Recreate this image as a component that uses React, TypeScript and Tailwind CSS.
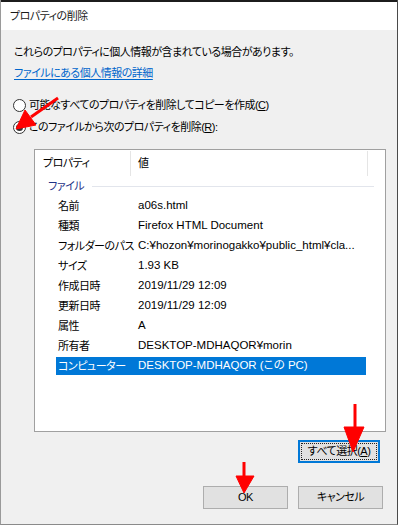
export default function App() {
  const rows: [string, string][] = [
    ["名前", "a06s.html"],
    ["種類", "Firefox HTML Document"],
    ["フォルダーのパス", "C:¥hozon¥morinogakko¥public_html¥cla..."],
    ["サイズ", "1.93 KB"],
    ["作成日時", "2019/11/29 12:09"],
    ["更新日時", "2019/11/29 12:09"],
    ["属性", "A"],
    ["所有者", "DESKTOP-MDHAQOR¥morin"],
  ];
  return (
    <div
      className="relative w-[398px] h-[525px] bg-[#f0f0f0] border-l border-r border-b border-l-[#9a9a9a] border-r-[#4a4a4a] border-b-[#8a8a8a] overflow-hidden text-[11px] tracking-[-0.5px] text-black [font-feature-settings:'palt']"
      style={{ fontFamily: '"Liberation Sans", "Noto Sans CJK JP", sans-serif' }}
    >
      <div className="h-[30px] bg-white border-t-2 border-[#1c1c1c] flex items-center pl-[9px] text-[#1a1a1a]">
        プロパティの削除
      </div>

      <div className="pt-[12px] pl-[13px] leading-[20px]">
        <div className="h-[20px]">これらのプロパティに個人情報が含まれている場合があります。</div>
        <div className="h-[20px] mt-[1px] text-[#0066cc] underline underline-offset-2">ファイルにある個人情報の詳細</div>

        <div className="mt-[12px] -ml-px flex items-center h-[20px]">
          <span className="w-[13px] h-[13px] rounded-full border border-[#333] bg-white"></span>
          <span className="ml-[3px]">
            可能なすべてのプロパティを削除してコピーを作成(<span className="underline">C</span>)
          </span>
        </div>
        <div className="mt-[2px] -ml-px flex items-center h-[20px]">
          <span className="w-[13px] h-[13px] rounded-full border border-[#333] bg-white flex items-center justify-center">
            <span className="w-[7px] h-[7px] rounded-full bg-[#333]"></span>
          </span>
          <span className="ml-[3px]">
            このファイルから次のプロパティを削除(<span className="underline">R</span>):
          </span>
        </div>
      </div>

      <div className="ml-[33px] mt-[12px] w-[352px] h-[283px] bg-white border border-[#a0a0a0] pt-px">
        <div className="flex h-[25px] items-center w-[333px]">
          <div className="w-[96px] pl-[8px] h-full flex items-center border-r border-[#e5e5e5]">プロパティ</div>
          <div className="flex-1 pl-[7px] h-full flex items-center border-r border-[#e5e5e5]">値</div>
        </div>
        <div className="flex items-center h-[20px] pl-[13px] pr-[11px]">
          <span className="text-[#1e3287]">ファイル</span>
          <span className="flex-1 ml-[8px] h-px bg-[#e2e5ec]"></span>
        </div>
        {rows.map(([k, v]) => (
          <div key={k} className="flex items-center h-[20px] ml-[21px] w-[310px]">
            <span className="w-[82px] pl-[2px] whitespace-nowrap">{k}</span>
            <span className="whitespace-nowrap text-[11.5px] tracking-normal">{v}</span>
          </div>
        ))}
        <div className="flex items-center h-[18px] mt-[1px] ml-[21px] w-[310px] bg-[#0078d7] text-white">
          <span className="w-[82px] pl-[2px] whitespace-nowrap">コンピューター</span>
          <span className="whitespace-nowrap text-[11.5px] tracking-normal">DESKTOP-MDHAQOR (この PC)</span>
        </div>
      </div>

      <div className="flex justify-end pr-[17px] mt-[8px]">
        <div className="w-[82px] h-[23px] bg-[#e1e1e1] border-2 border-[#0078d7] p-px">
          <div className="w-full h-full border border-dotted border-[#222] flex items-center justify-center">
            すべて選択(<span className="underline">A</span>)
          </div>
        </div>
      </div>

      <div className="flex justify-end gap-[10px] pr-[14px] mt-[23px]">
        <div className="w-[85px] h-[23px] bg-[#e1e1e1] border border-[#adadad] flex items-center justify-center">OK</div>
        <div className="w-[85px] h-[23px] bg-[#e1e1e1] border border-[#adadad] flex items-center justify-center">キャンセル</div>
      </div>

      <svg className="absolute left-0 top-0 pointer-events-none" width="398" height="525" viewBox="0 0 398 525">
        <g fill="#ff0000" stroke="#ff0000">
          <line x1="57" y1="98" x2="30" y2="117" strokeWidth="3" />
          <polygon points="15,129 24,110 35,125" strokeWidth="1" />
          <line x1="354" y1="404" x2="354" y2="430" strokeWidth="3" />
          <polygon points="343,427 363,427 352,452" strokeWidth="1" />
          <line x1="243" y1="462" x2="243" y2="478" strokeWidth="3" />
          <polygon points="235,476 253,476 243,493" strokeWidth="1" />
        </g>
      </svg>
    </div>
  );
}
